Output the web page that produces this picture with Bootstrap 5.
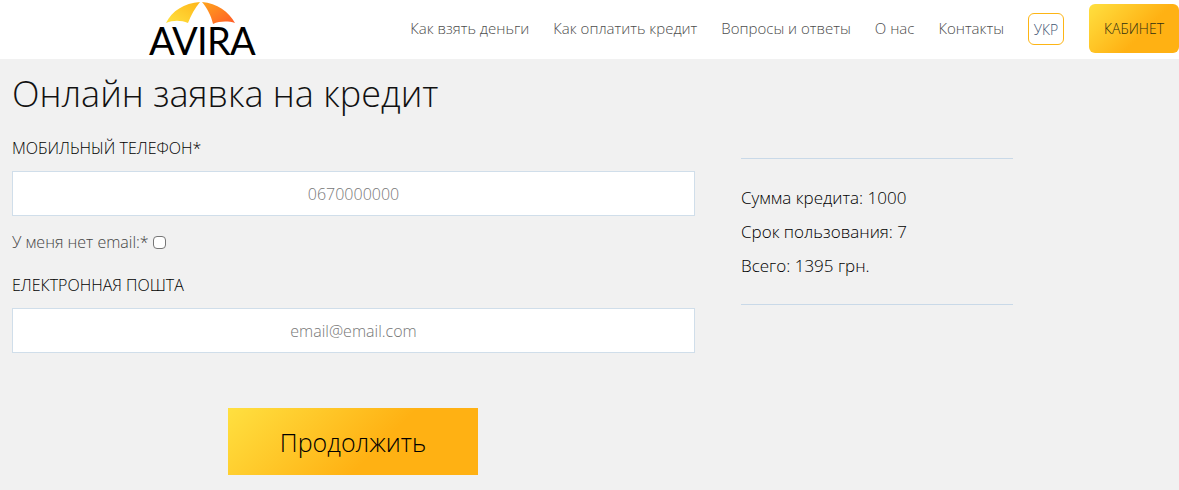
<!DOCTYPE html>
<html lang="ru">
<head>
<meta charset="utf-8">
<title>Онлайн заявка на кредит</title>
<link href="https://cdn.jsdelivr.net/npm/bootstrap@5.3.0/dist/css/bootstrap.min.css" rel="stylesheet">
<style>
html,body{height:490px;overflow:hidden}
body{background:#f1f1f1;font-family:"Open Sans",sans-serif;color:#333;font-weight:300}
.topbar{height:59px;background:#fff;padding:0}
.logo-box{width:110px;margin-left:149px;height:59px;line-height:1}
.logo-box svg{display:block;margin-left:6px}
.logo-word{display:block;font-family:"Lato",sans-serif;font-weight:400;font-size:38px;letter-spacing:-.7px;color:#000;line-height:30px;margin-top:0;white-space:nowrap}
.menu-link{font-size:15px;color:#4d4d4d;font-weight:300;text-decoration:none;padding:0;margin-right:24px;margin-top:17px}
.lang-btn{width:36px;height:32px;border:1px solid #fdb515;border-radius:6px;font-size:14px;color:#3f5673;display:flex;align-items:center;justify-content:center;margin-top:13px;margin-right:25px;text-decoration:none;font-weight:300}
.cab-btn{width:90px;height:49px;margin-top:4px;border-radius:6px;background:linear-gradient(135deg,#ffe040 0%,#ffb113 60%);font-size:14px;color:#2f2f10;font-weight:300;display:flex;align-items:center;justify-content:center;text-decoration:none}
.page-title{font-size:36px;font-weight:300;color:#111;margin:13px 0 0;line-height:44px}
.form-side{width:707px;padding:0 12px}
.sum-side{width:272px;margin-left:34px;padding-top:42px;font-size:17px;font-weight:300;color:#000}
.field-label{font-size:16px;font-weight:300;color:#000;margin:0 0 12px;line-height:22px;display:block}
.first-label{margin-top:21px}
.field-input{height:45px;border:1px solid #d0deea;border-radius:0;background:#fff;text-align:center;font-size:16px;font-weight:300;color:#555;padding:0}
.field-input::placeholder{color:#777;opacity:1}
.check-row{font-size:16px;font-weight:300;color:#444;margin:14px 0 20px;line-height:24px;display:flex;align-items:center;gap:4px}
.check-row input{width:13px;height:13px;margin:0;background:#fff;border:1px solid #767676;border-radius:2.5px}
.sum-rule{border:0;border-top:1px solid #c9d9e8;opacity:1;margin:0}
.rule-top{margin-bottom:22px}
.rule-bottom{margin-top:21px}
.sum-line{margin:0;line-height:34px}
.go-btn{display:flex;align-items:center;justify-content:center;width:250px;height:67px;margin:55px 0 0 216px;border:0;border-radius:0;padding:2px 0 0;background:linear-gradient(135deg,#ffe040 0%,#ffb113 60%);font-size:25px;font-weight:300;color:#000}
</style>
</head>
<body>
<nav class="topbar d-flex justify-content-between">
  <a class="logo-box d-block text-decoration-none" href="#">
    <svg width="96" height="25" viewBox="0 0 96 25" aria-hidden="true">
      <defs>
        <linearGradient id="ga" x1="0" y1="1" x2="1" y2="0"><stop offset="0" stop-color="#ffe23f"/><stop offset="1" stop-color="#ffb619"/></linearGradient>
        <linearGradient id="gb" x1="0" y1="0" x2="1" y2="1"><stop offset="0" stop-color="#ffa51c"/><stop offset="1" stop-color="#ff5a28"/></linearGradient>
      </defs>
      <path d="M45 2C29 3 17 11 11 23C18 20 26 20 33 23C36 15 40 8 45 2Z" fill="url(#ga)"/>
      <path d="M47 2C62 3 74 12 80 23C73 21 65 21 58 24C56 15 52 8 47 2Z" fill="url(#gb)"/>
    </svg>
    <span class="logo-word">AVIRA</span>
  </a>
  <div class="d-flex align-items-start">
    <a class="menu-link" href="#">Как взять деньги</a>
    <a class="menu-link" href="#">Как оплатить кредит</a>
    <a class="menu-link" href="#">Вопросы и ответы</a>
    <a class="menu-link" href="#">О нас</a>
    <a class="menu-link" href="#">Контакты</a>
    <a class="lang-btn" href="#">УКР</a>
    <a class="cab-btn" href="#">КАБИНЕТ</a>
  </div>
</nav>
<main>
  <h1 class="page-title px-2 ms-1">Онлайн заявка на кредит</h1>
  <div class="d-flex">
    <form class="form-side">
      <label class="field-label first-label" for="ph">МОБИЛЬНЫЙ ТЕЛЕФОН*</label>
      <input id="ph" class="form-control field-input" placeholder="0670000000">
      <div class="check-row"><label for="ne">У меня нет email:*</label><input id="ne" class="form-check-input" type="checkbox"></div>
      <label class="field-label" for="em">ЕЛЕКТРОННАЯ ПОШТА</label>
      <input id="em" class="form-control field-input" placeholder="email@email.com">
      <button type="button" class="btn go-btn">Продолжить</button>
    </form>
    <aside class="sum-side">
      <hr class="sum-rule rule-top">
      <p class="sum-line">Сумма кредита: 1000</p>
      <p class="sum-line">Срок пользования: 7</p>
      <p class="sum-line">Всего: 1395 грн.</p>
      <hr class="sum-rule rule-bottom">
    </aside>
  </div>
</main>
<script src="https://cdn.jsdelivr.net/npm/bootstrap@5.3.0/dist/js/bootstrap.bundle.min.js"></script>
</body>
</html>
